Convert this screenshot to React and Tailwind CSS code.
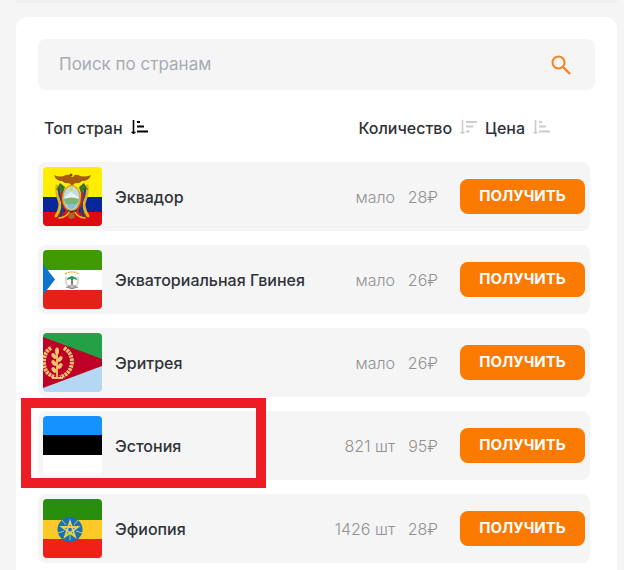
import React from "react";

function SortAsc() {
  return (
    <svg viewBox="0 0 17 15" className="h-[15px] w-[17px] shrink-0" fill="none" stroke="currentColor" strokeWidth="2" aria-hidden="true">
      <path d="M2.500 0V14M.5 12.500H4.500" strokeWidth="1.600" />
      <path d="M6 2H9M6 6.500H13M6 11.500H17" />
    </svg>
  );
}

function SortDesc() {
  return (
    <svg viewBox="0 0 17 15" className="h-[15px] w-[17px] shrink-0" fill="none" stroke="currentColor" strokeWidth="2" aria-hidden="true">
      <path d="M2.500 0V14M.5 12.500H4.500" strokeWidth="1.600" />
      <path d="M6 2H17M6 6.500H13.500M6 11.500H9.500" />
    </svg>
  );
}

function Ecuador() {
  return (
    <>
      <path fill="#ffee00" d="M0 0h59v30H0z" />
      <path fill="#07269a" d="M0 30h59v15H0z" />
      <path fill="#dd0a12" d="M0 45h59v14H0z" />
      <g fill="none" strokeLinecap="round">
        <path stroke="#e0b21c" strokeWidth="3" d="M14 19Q13 26 16 33T13 49M44 19Q45 26 42 33T45 49" />
        <path stroke="#1b3f8c" strokeWidth="2.500" d="M16 22Q16 28 19 34T17 50M42 22Q42 28 39 34T41 50" />
        <path stroke="#c8291e" strokeWidth="2.500" d="M19 24Q18 34 22 40T20 51M39 24Q40 34 36 40T38 51" />
        <path stroke="#e9bd18" strokeWidth="1.500" d="M16 51Q24 50 26 45M42 51Q34 50 32 45" />
      </g>
      <path fill="#3c7429" d="m17 16 5 4-2 6-4-4-3 1ZM41 16l-5 4 2 6 4-4 3 1Z" />
      <path fill="#a65a12" d="M11 8Q17 11 23 8Q27 7 28 10H30Q31 7 35 8Q41 11 48 8Q46 14 39 14Q36 17 32 16L29 19 26 16Q22 17 19 14Q13 14 11 8Z" />
      <circle cx="28" cy="8" r="1.500" fill="#7d430f" />
      <ellipse cx="28.500" cy="31" rx="9.500" ry="13" fill="#d8a51e" />
      <ellipse cx="28.500" cy="31" rx="8" ry="11.500" fill="#b6dfea" />
      <path fill="#edf4f0" d="m22 30 6-5 7 5v3H22Z" />
      <path fill="#7cb676" d="M21 32q8-3 15 0 0 3-2 5H23q-2-2-2-5Z" />
      <path fill="#88bfd7" d="M23 37h11q-2 5-5.500 5T23 37Z" />
      <circle cx="28.500" cy="22.500" r="1.500" fill="#f3cc2c" />
      <path fill="#a9652a" d="m26 45 2.500 1 2.500-1 1 6-3.500 1-3.500-1Z" />
    </>
  );
}

function EquatorialGuinea() {
  return (
    <>
      <path fill="#3e9a00" d="M0 0h59v20H0z" />
      <path fill="#fff" d="M0 20h59v20H0z" />
      <path fill="#e32118" d="M0 40h59v19H0z" />
      <path fill="#0d73ce" d="M0 14 12 29.500 0 45Z" />
      <path fill="none" stroke="#e5b536" strokeWidth="1.500" strokeDasharray="2 1" d="M22 24q7-4 14 0" />
      <path fill="none" stroke="#b5b5b5" d="M23 27v6q1 4 6 5 5-1 6-5v-6" />
      <path fill="#249c68" d="M24 30q0-3 3-3 2-2 4 0 3 0 3 3l-3-1-2 1-2-1Z" />
      <path stroke="#72553d" strokeWidth="1.500" d="M29 29v6" />
      <path fill="none" stroke="#777" d="M25 36h8M23 37q6 3 12 0" />
    </>
  );
}

function Eritrea() {
  return (
    <>
      <path fill="#24a047" d="M0 0h59v29H0z" />
      <path fill="#b4d7f4" d="M0 29h59v30H0z" />
      <path fill="#be0027" d="M0 4 59 26v7L0 55Z" />
      <g fill="none" stroke="#f2c56f">
        <path strokeWidth="4" strokeDasharray="2.500 .8" d="M8 15Q1 19 1 29 1 41 12 44M21 15Q29 20 29 29 28 41 17 44" />
        <path strokeWidth="1.800" d="M14 18v27M9 45h11" />
      </g>
      <g fill="#f2c56f">
        <ellipse cx="14" cy="18" rx="2" ry="3.500" />
        <ellipse cx="11" cy="23" rx="2" ry="3.200" transform="rotate(-40 11 23)" />
        <ellipse cx="17" cy="26" rx="2" ry="3.200" transform="rotate(40 17 26)" />
        <ellipse cx="11" cy="30" rx="2" ry="3.200" transform="rotate(-40 11 30)" />
        <ellipse cx="17" cy="33" rx="2" ry="3.200" transform="rotate(40 17 33)" />
        <ellipse cx="11" cy="37" rx="2" ry="3.200" transform="rotate(-40 11 37)" />
      </g>
    </>
  );
}

function Estonia() {
  return (
    <>
      <path fill="#1592ff" d="M0 0h59v20H0z" />
      <path fill="#000" d="M0 19h59v21H0z" />
      <path fill="#fff" d="M0 39h59v20H0z" />
    </>
  );
}

function Ethiopia() {
  return (
    <>
      <path fill="#298e0c" d="M0 0h59v21H0z" />
      <path fill="#ffc928" d="M0 21h59v19H0z" />
      <path fill="#ef2118" d="M0 40h59v19H0z" />
      <circle cx="27" cy="30.500" r="12.500" fill="#1472b9" />
      <path fill="none" stroke="#e4d052" strokeWidth="1.800" d="m27 22.500 5 15-13-9.500h16L22 37.500Z" />
      <path stroke="#c9c95b" strokeWidth="1" d="M27 35v6M31 26l4-5M23 26l-4-5M33 32l6 2M21 32l-6 2" />
    </>
  );
}

const countries = [
  { name: "Эквадор", count: "мало", price: "28₽", Flag: Ecuador },
  { name: "Экваториальная Гвинея", count: "мало", price: "26₽", Flag: EquatorialGuinea },
  { name: "Эритрея", count: "мало", price: "26₽", Flag: Eritrea },
  { name: "Эстония", count: "821 шт", price: "95₽", Flag: Estonia, marked: true },
  { name: "Эфиопия", count: "1426 шт", price: "28₽", Flag: Ethiopia },
];

function CountryRow({ name, count, price, Flag, marked }) {
  return (
    <li className="relative flex h-[69px] items-center rounded-lg bg-[#f5f5f5] px-[5px]">
      <svg viewBox="0 0 59 59" className="size-[59px] shrink-0 rounded-[4px]" role="img" aria-label={name}>
        <Flag />
      </svg>
      <span className="ml-[13px] flex-1 text-base font-medium whitespace-nowrap text-[#303338]">{name}</span>
      <span className="text-base font-light whitespace-nowrap text-[#929292]">{count}</span>
      <span className="w-[43px] text-right text-base font-light whitespace-nowrap text-[#929292]">{price}</span>
      <button type="button" className="ml-[22px] h-[35px] w-[125px] shrink-0 rounded-lg bg-[#fb7a00] text-[15px] font-bold text-white">
        ПОЛУЧИТЬ
      </button>
      {marked && <span className="pointer-events-none absolute -top-[13px] -left-[17px] h-[90px] w-[245px] border-10 border-[#ee1c25]" />}
    </li>
  );
}

export default function App() {
  return (
    <div className="flex min-h-screen flex-col bg-[#f5f5f5] pr-[7px] pl-4 font-['Inter','Liberation_Sans',sans-serif]">
      <div className="h-[3px] bg-[#efefef]" />
      <main className="mt-[14px] flex-1 rounded-t-xl bg-white px-[22px] pt-[22px]">
        <form className="flex h-[51px] items-center rounded-lg bg-[#f5f5f5] pr-6 pl-[21px]" onSubmit={(e) => e.preventDefault()}>
          <input
            type="text"
            aria-label="Поиск по странам"
            placeholder="Поиск по странам"
            className="min-w-0 flex-1 bg-transparent text-[17px] text-[#303338] outline-none placeholder:text-[#a9abb3]"
          />
          <button type="submit" aria-label="Найти" className="text-[#f5821f]">
            <svg viewBox="0 0 20 20" className="size-5" fill="none" stroke="currentColor" strokeWidth="2" aria-hidden="true">
              <circle cx="7.500" cy="7.500" r="6" />
              <path strokeWidth="2.400" d="m12 12 7 7" />
            </svg>
          </button>
        </form>
        <div className="flex h-[72px] items-center pt-[3px] pr-[45px] pl-[6px] text-base font-medium text-[#303338]">
          <button type="button" className="flex items-center gap-2">
            Топ стран
            <span className="text-black"><SortAsc /></span>
          </button>
          <button type="button" className="ml-auto flex items-center gap-2">
            Количество
            <span className="text-[#cccccc]"><SortDesc /></span>
          </button>
          <button type="button" className="ml-2 flex items-center gap-2">
            Цена
            <span className="text-[#cccccc]"><SortAsc /></span>
          </button>
        </div>
        <ul className="flex flex-col gap-[14px] pr-[5px]">
          {countries.map((country) => (
            <CountryRow key={country.name} {...country} />
          ))}
        </ul>
      </main>
    </div>
  );
}
